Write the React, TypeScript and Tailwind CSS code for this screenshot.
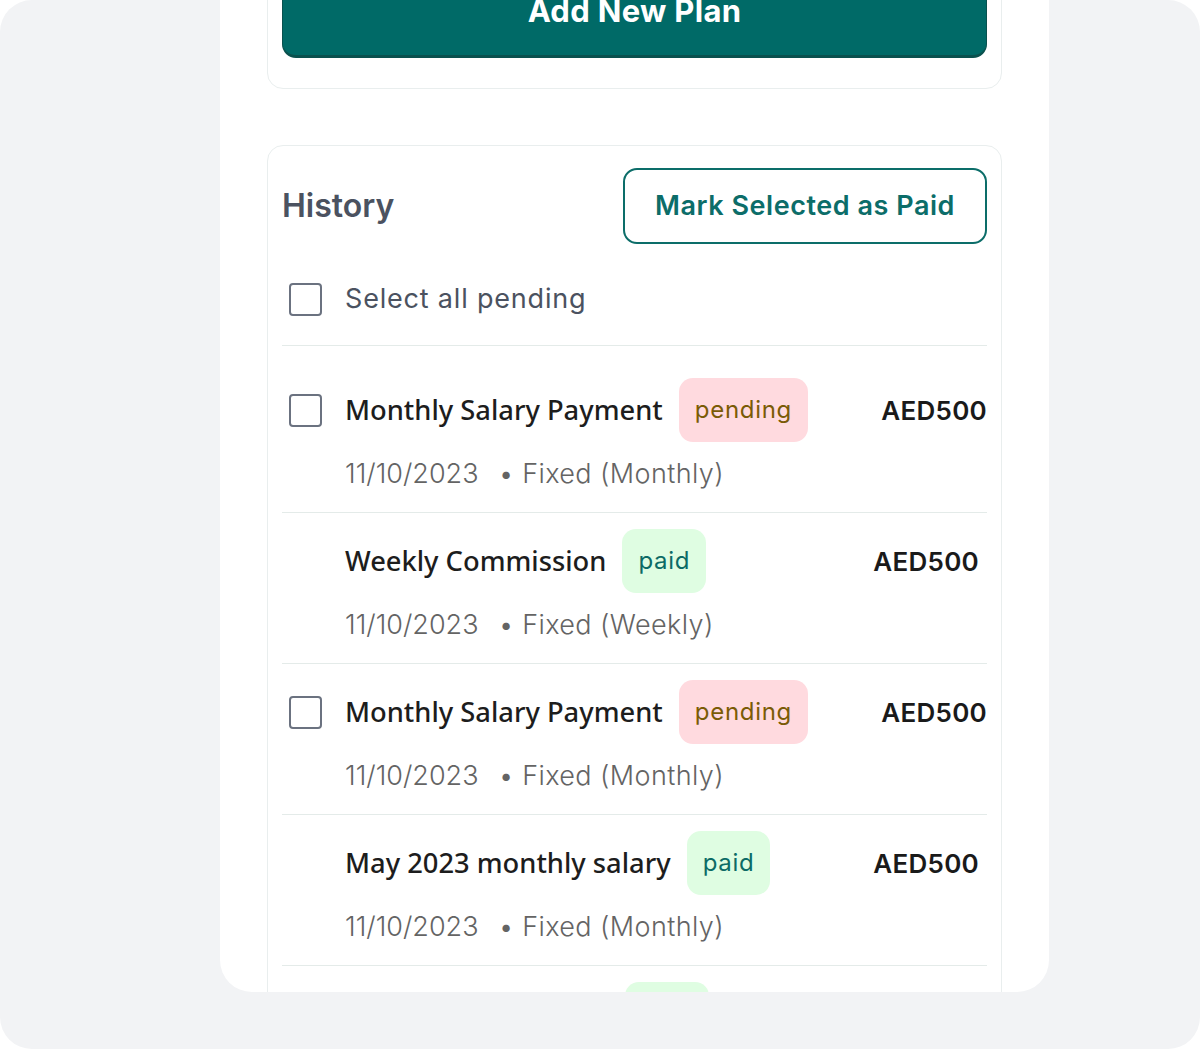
const poppins = { fontFamily: 'Inter, "Noto Sans", sans-serif' };

type Item = {
  title: string;
  status: 'pending' | 'paid';
  date: string;
  kind: string;
};

const items: Item[] = [
  { title: 'Monthly Salary Payment', status: 'pending', date: '11/10/2023', kind: 'Fixed (Monthly)' },
  { title: 'Weekly Commission', status: 'paid', date: '11/10/2023', kind: 'Fixed (Weekly)' },
  { title: 'Monthly Salary Payment', status: 'pending', date: '11/10/2023', kind: 'Fixed (Monthly)' },
  { title: 'May 2023 monthly salary', status: 'paid', date: '11/10/2023', kind: 'Fixed (Monthly)' },
  { title: '5% commission fees', status: 'paid', date: '11/10/2023', kind: 'Fixed (Monthly)' },
];

function Checkbox() {
  return <div className="ml-[7px] h-[33px] w-[33px] rounded-[4px] border-[2.5px] border-[#6b7280] bg-white" />;
}

function Row({ item }: { item: Item }) {
  const pending = item.status === 'pending';
  return (
    <div className="border-b border-[#e4ebe9] pt-4 pb-[18px]">
      <div className="flex h-16 items-center">
        <div className="w-[63px] shrink-0">{pending && <Checkbox />}</div>
        <span className="text-[27.3px] font-medium text-[#1d1d1d]" style={{ fontFamily: '"Noto Sans", sans-serif' }}>
          {item.title}
        </span>
        <span
          className={
            pending
              ? 'ml-4 flex h-16 items-center rounded-[14px] bg-[#ffdadf] px-4 text-[24px] tracking-[0.03em] text-[#7a5b06]'
              : 'ml-4 flex h-16 items-center rounded-[14px] bg-[#dffde2] px-4 text-[24px] tracking-[0.03em] text-[#0c6b66]'
          }
          style={poppins}
        >
          {item.status}
        </span>
        <span
          className={
            pending
              ? 'ml-auto text-[26px] font-semibold tracking-[0.01em] text-[#1a1a1a]'
              : 'ml-auto mr-2 text-[26px] font-semibold tracking-[0.01em] text-[#1a1a1a]'
          }
          style={poppins}
        >
          AED500
        </span>
      </div>
      <div className="mt-3 flex pl-[63px] text-[27px] leading-[40px] text-[#646464]" style={poppins}>
        <span className="font-light">{item.date}</span>
        <span className="ml-5 font-light tracking-[0.015em]">• {item.kind}</span>
      </div>
    </div>
  );
}

export default function App() {
  return (
    <div className="h-[1049px] w-[1200px] overflow-hidden bg-white">
      <div className="h-full rounded-[32px] bg-[#f2f3f5] pl-[220px]">
        <div className="h-[992px] w-[829px] overflow-hidden rounded-b-[32px] bg-white px-[47px]">
          <div className="-mt-[50px]">
            {/* Add plan card */}
            <div className="rounded-2xl border border-[#e9eeee] px-[14px] pt-[15px] pb-[30px]">
              <button
                className="flex h-[92px] w-full items-center justify-center rounded-[14px] border border-b-[3px] border-[#0a514e] bg-[#006a67] text-[31px] font-bold tracking-[0.01em] text-white"
                style={poppins}
              >
                Add New Plan
              </button>
            </div>

            {/* History card */}
            <div className="mt-14 rounded-2xl border border-[#e9eeee] px-[14px] pt-[22px]">
              <div className="flex items-center justify-between">
                <h2 className="text-[32px] font-semibold text-[#4b5260]" style={poppins}>
                  History
                </h2>
                <button
                  className="flex h-[76px] w-[364px] items-center justify-center rounded-[14px] border-2 border-[#0c6d69] text-[27px] font-semibold tracking-[0.02em] text-[#0c6d69]"
                  style={poppins}
                >
                  Mark Selected as Paid
                </button>
              </div>

              <div className="mt-[35px] flex items-center border-b border-[#e4ebe9] pb-[26px]">
                <Checkbox />
                <span className="ml-[23px] text-[27px] leading-[40px] tracking-[0.03em] text-[#4b5260]" style={poppins}>
                  Select all pending
                </span>
              </div>

              <div className="mt-4">
                {items.map((it, i) => (
                  <Row key={i} item={it} />
                ))}
              </div>
            </div>
          </div>
        </div>
      </div>
    </div>
  );
}
